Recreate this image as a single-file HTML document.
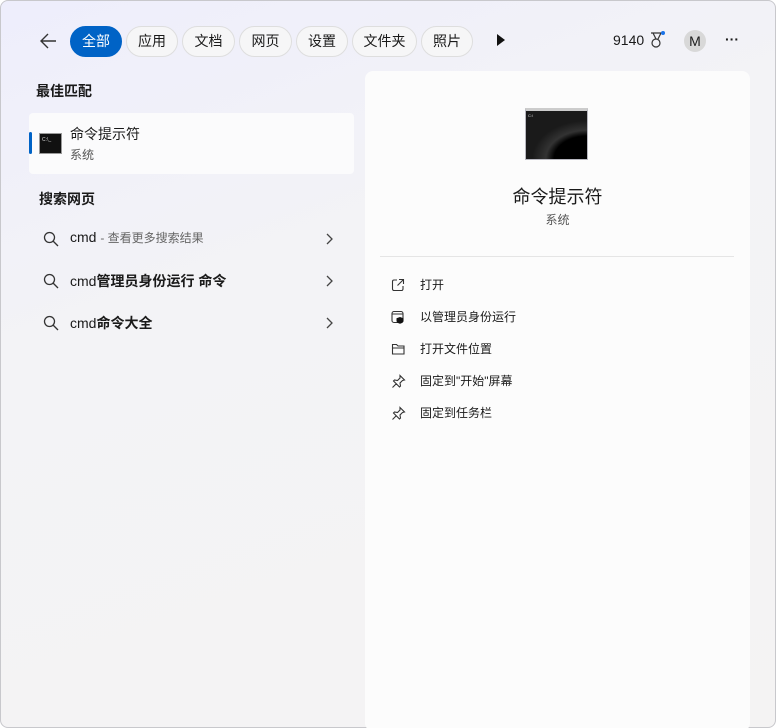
<!DOCTYPE html>
<html><head><meta charset="utf-8"><style>
*{margin:0;padding:0;box-sizing:border-box}
body{width:777px;height:728px;overflow:hidden;background:#fff;font-family:"Liberation Sans","Noto Sans CJK SC",sans-serif;color:#1a1a1a;font-size:13px;position:relative}
.win{position:absolute;left:0;top:0;width:776px;height:728px;box-shadow:inset 0 0 0 1px #c8c8cc;border-radius:8px;background:linear-gradient(160deg,#eeeefc 0%,#f3f3f6 35%,#f4f3f3 100%);overflow:hidden}
.pill{position:absolute;top:26px;height:31px;border:1px solid #dedede;border-radius:16px;background:#f6f6f7;font-size:14px;line-height:29px;text-align:center}
.pill.on{background:#0063c6;color:#fff;border-color:#0063c6}
.abs{position:absolute}
.h{font-weight:bold;font-size:14px}
.right{position:absolute;left:365px;top:71px;width:385px;height:660px;background:#fcfcfc;border-radius:8px}
.act{position:absolute;left:55px;font-size:12px}
.ic{position:absolute;left:26px}
</style></head><body>
<div class="win">
<svg class="abs" style="left:38px;top:31px" width="20" height="20" viewBox="0 0 20 20"><path d="M18 10H3M10 3L3 10l7 7" fill="none" stroke="#333" stroke-width="1.4"/></svg>
<div class="pill on" style="left:70px;width:52px">全部</div>
<div class="pill" style="left:126px;width:52px">应用</div>
<div class="pill" style="left:182px;width:53px">文档</div>
<div class="pill" style="left:239px;width:53px">网页</div>
<div class="pill" style="left:296px;width:52px">设置</div>
<div class="pill" style="left:352px;width:65px">文件夹</div>
<div class="pill" style="left:421px;width:52px">照片</div>
<svg class="abs" style="left:496px;top:33px" width="10" height="14"><path d="M1 1L9 7L1 13Z" fill="#111"/></svg>
<div class="abs" style="left:613px;top:32px;font-size:14px">9140</div>
<svg class="abs" style="left:648px;top:30px" width="18" height="20" viewBox="0 0 18 20"><path d="M3 3h10l-3 6M5 3l3 6" fill="none" stroke="#333" stroke-width="1.2"/><circle cx="8" cy="13" r="4" fill="none" stroke="#333" stroke-width="1.2"/><circle cx="15" cy="3" r="2" fill="#1a73e8"/></svg>
<div class="abs" style="left:684px;top:30px;width:22px;height:22px;border-radius:11px;background:#d8d8d8;text-align:center;line-height:22px;font-size:14px">M</div>
<div class="abs" style="left:725px;top:31px;font-size:14px;font-weight:bold">···</div>

<div class="abs h" style="left:36px;top:81px">最佳匹配</div>
<div class="abs" style="left:29px;top:113px;width:325px;height:61px;background:#fbfbfc;border-radius:4px"></div>
<div class="abs" style="left:29px;top:132px;width:3px;height:22px;background:#0063c6;border-radius:2px"></div>
<div class="abs" style="left:39px;top:133px;width:23px;height:21px;background:#111;border:1px solid #999"><div style="color:#ddd;font-size:5px;margin:3px 2px">C:\_</div></div>
<div class="abs" style="left:70px;top:124px;font-size:14px">命令提示符</div>
<div class="abs" style="left:70px;top:146px;font-size:12px;color:#555">系统</div>

<div class="abs h" style="left:39px;top:189px">搜索网页</div>
<svg class="abs" style="left:43px;top:231px" width="16" height="16"><circle cx="6.5" cy="6.5" r="5" fill="none" stroke="#333" stroke-width="1.3"/><path d="M10 10l5 5" stroke="#333" stroke-width="1.3"/></svg>
<div class="abs" style="left:70px;top:229px;font-size:14px">cmd <span style="color:#666;font-size:12px">- 查看更多搜索结果</span></div>
<svg class="abs" style="left:43px;top:273px" width="16" height="16"><circle cx="6.5" cy="6.5" r="5" fill="none" stroke="#333" stroke-width="1.3"/><path d="M10 10l5 5" stroke="#333" stroke-width="1.3"/></svg>
<div class="abs" style="left:70px;top:271px;font-size:14px">cmd<b>管理员身份运行 命令</b></div>
<svg class="abs" style="left:43px;top:315px" width="16" height="16"><circle cx="6.5" cy="6.5" r="5" fill="none" stroke="#333" stroke-width="1.3"/><path d="M10 10l5 5" stroke="#333" stroke-width="1.3"/></svg>
<div class="abs" style="left:70px;top:313px;font-size:14px">cmd<b>命令大全</b></div>
<svg class="abs" style="left:325px;top:233px" width="10" height="12"><path d="M2 1l5 5-5 5" fill="none" stroke="#444" stroke-width="1.3"/></svg>
<svg class="abs" style="left:325px;top:275px" width="10" height="12"><path d="M2 1l5 5-5 5" fill="none" stroke="#444" stroke-width="1.3"/></svg>
<svg class="abs" style="left:325px;top:317px" width="10" height="12"><path d="M2 1l5 5-5 5" fill="none" stroke="#444" stroke-width="1.3"/></svg>

<div class="right">
<div class="abs" style="left:160px;top:37px;width:63px;height:52px;background:radial-gradient(ellipse 90% 80% at 100% 100%,#000 60%,#333 75%,#1a1a1a 100%);border:1px solid #b8b8c0;border-top:3px solid #ccc"><div style="color:#ddd;font-size:4px;margin:2px">C:\</div></div>
<div class="abs" style="left:0;width:385px;top:112px;text-align:center;font-size:18px">命令提示符</div>
<div class="abs" style="left:0;width:385px;top:140px;text-align:center;font-size:12px;color:#555">系统</div>
<div class="abs" style="left:15px;top:185px;width:354px;height:1px;background:#e5e5e5"></div>
<svg class="ic" style="top:207px" width="14" height="14"><path d="M6 2H3a1.5 1.5 0 0 0-1.5 1.5v7.5A1.5 1.5 0 0 0 3 12.5h7.5A1.5 1.5 0 0 0 12 11V8M8 1.5h4.5V6M12.5 1.5L6.5 7.5" fill="none" stroke="#333" stroke-width="1.1"/></svg>
<div class="act" style="top:205px">打开</div>
<svg class="ic" style="top:239px" width="14" height="14"><rect x="1" y="1.5" width="11" height="11" rx="2" fill="none" stroke="#333" stroke-width="1.1"/><path d="M1 4h11" stroke="#333"/><path d="M9 7l3.5 1.2v2.5c0 1.5-1.5 2.5-3.5 3-2-.5-3.5-1.5-3.5-3V8.2z" fill="#111"/></svg>
<div class="act" style="top:237px">以管理员身份运行</div>
<svg class="ic" style="top:271px" width="15" height="14"><path d="M1.5 2.5h4l1.5 1.5h6v8H1.5zM1.5 6h12" fill="none" stroke="#333" stroke-width="1.1"/></svg>
<div class="act" style="top:269px">打开文件位置</div>
<svg class="ic" style="top:303px" width="15" height="15"><path d="M9 1.5l4.5 4.5-2 .5-2.5 2.5.5 3-1 1L2.5 7l1-1 3 .5L9 4zM5 10l-3.5 3.5" fill="none" stroke="#333" stroke-width="1.1"/></svg>
<div class="act" style="top:301px">固定到"开始"屏幕</div>
<svg class="ic" style="top:335px" width="15" height="15"><path d="M9 1.5l4.5 4.5-2 .5-2.5 2.5.5 3-1 1L2.5 7l1-1 3 .5L9 4zM5 10l-3.5 3.5" fill="none" stroke="#333" stroke-width="1.1"/></svg>
<div class="act" style="top:333px">固定到任务栏</div>
</div>
</div>
</body></html>
